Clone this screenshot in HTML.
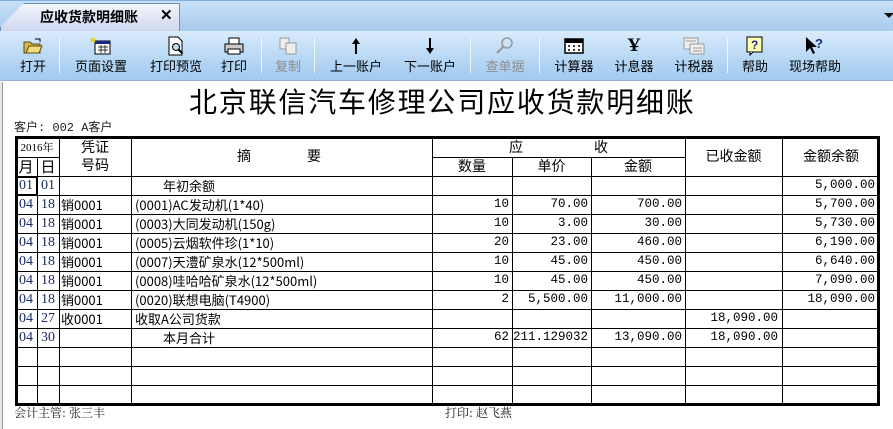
<!DOCTYPE html>
<html><head><meta charset="utf-8">
<style>
*{margin:0;padding:0;box-sizing:border-box}
body{width:893px;height:429px;overflow:hidden;background:#fff;font-family:"Liberation Sans","Noto Sans CJK SC",sans-serif;position:relative}
.a{position:absolute}
#tabbar{left:0;top:0;width:893px;height:31px;background:linear-gradient(#c9e0f7,#a8cbee);border-top:1px solid #7fb0e0}
#tab{left:0;top:3px;width:180px;height:28px;background:linear-gradient(#f3f6fd,#cfd6ef);border:1px solid #6a8fc0;border-bottom:none;clip-path:polygon(24px 0,180px 0,180px 28px,0 28px,0 24px);}
#toolbar{left:0;top:31px;width:893px;height:50px;background:linear-gradient(#d9ecfc,#b5d6f4 60%,#a3caf0);border-bottom:1px solid #8fb2d6}
.tb{position:absolute;top:31px;height:50px;text-align:center;font-size:13px;color:#000;font-family:"Noto Sans CJK SC",sans-serif}
.tb .ic{height:26px;display:flex;align-items:center;justify-content:center;padding-top:4px}
.tb .lb{line-height:16px;margin-top:1px}
.dis{color:#8d8d8d!important}
.sep{position:absolute;top:37px;width:1px;height:36px;background:#8fb5dc;border-right:1px solid #eef6ff}
.h{position:absolute;height:1px;background:#000}
.v{position:absolute;width:1px;background:#000}
.c{position:absolute;height:19px;line-height:19px;font-size:13px;font-family:"Noto Sans CJK SC",sans-serif;white-space:nowrap}
.n{font-family:"Liberation Mono","Noto Sans CJK SC",monospace;font-size:12.5px;text-align:right}
.md{font-family:"Liberation Serif",serif;font-size:14px;color:#1b2a66;text-align:center}
.hd{position:absolute;font-size:14px;font-family:"Noto Sans CJK SC",sans-serif;text-align:center;line-height:19px;white-space:pre}
</style></head><body>
<div class="a" id="tabbar"></div>
<div class="a" id="tab"></div>
<div class="a" style="left:40px;top:8px;font-size:14px;font-weight:bold;font-family:'Noto Sans CJK SC',sans-serif;line-height:18px">应收货款明细账</div>
<div class="a" style="left:160px;top:7px;font-size:15px;font-weight:bold;line-height:18px">✕</div>
<div class="a" style="left:884px;top:13px;width:0;height:0;border-left:5px solid transparent;border-right:5px solid transparent;border-top:5px solid #111"></div>
<div class="a" id="toolbar"></div>

<div class="tb" style="left:13px;width:40px"><div class="ic"><svg width="20" height="16"><path d="M1 4h6l2 2h8v9H1z" fill="#d8b84a" stroke="#5a4a10"/><path d="M3 15l3-7h13l-3 7z" fill="#f0dc7a" stroke="#5a4a10"/><path d="M12 1h5v3" fill="none" stroke="#000"/></svg></div><div class="lb">打开</div></div>
<div class="sep" style="left:59px"></div>
<div class="tb" style="left:68px;width:66px"><div class="ic"><svg width="22" height="18"><rect x="5" y="4" width="15" height="13" fill="#fff" stroke="#000"/><rect x="5" y="4" width="15" height="3" fill="#1a2a8a"/><path d="M8 10h10M8 13h10M11 8v8M15 8v8" stroke="#333"/><path d="M1 1l4 4M5 1L1 5" stroke="#e8d000" stroke-width="1.5"/></svg></div><div class="lb">页面设置</div></div>
<div class="tb" style="left:143px;width:66px"><div class="ic"><svg width="20" height="20"><path d="M3 1h9l4 4v14H3z" fill="#fff" stroke="#000"/><circle cx="10" cy="11" r="3.5" fill="#bde" stroke="#000"/><path d="M12.5 13.5l4 4" stroke="#000" stroke-width="2"/></svg></div><div class="lb">打印预览</div></div>
<div class="tb" style="left:214px;width:40px"><div class="ic"><svg width="22" height="18"><rect x="6" y="1" width="10" height="6" fill="#fff" stroke="#000"/><rect x="2" y="7" width="18" height="8" fill="#ccc" stroke="#000"/><rect x="5" y="12" width="12" height="5" fill="#fff" stroke="#000"/></svg></div><div class="lb">打印</div></div>
<div class="sep" style="left:261px"></div>
<div class="tb dis" style="left:268px;width:40px"><div class="ic"><svg width="20" height="18"><rect x="2" y="1" width="9" height="11" fill="#eee" stroke="#999"/><rect x="8" y="6" width="10" height="11" fill="#eee" stroke="#999"/></svg></div><div class="lb">复制</div></div>
<div class="sep" style="left:314px"></div>
<div class="tb" style="left:325px;width:62px"><div class="ic"><svg width="14" height="18"><path d="M7 1l-4 6h3v10h2V7h3z" fill="#000"/></svg></div><div class="lb">上一账户</div></div>
<div class="tb" style="left:399px;width:62px"><div class="ic"><svg width="14" height="18"><path d="M7 17l-4-6h3V1h2v10h3z" fill="#000"/></svg></div><div class="lb">下一账户</div></div>
<div class="sep" style="left:470px"></div>
<div class="tb dis" style="left:480px;width:50px"><div class="ic"><svg width="20" height="20"><circle cx="12" cy="7" r="5" fill="none" stroke="#999" stroke-width="1.5"/><path d="M8 11l-6 6" stroke="#999" stroke-width="2"/></svg></div><div class="lb">查单据</div></div>
<div class="sep" style="left:539px"></div>
<div class="tb" style="left:549px;width:50px"><div class="ic"><svg width="20" height="16"><rect x="1" y="1" width="18" height="14" fill="#fff" stroke="#000" stroke-width="1.5"/><rect x="1" y="1" width="18" height="4" fill="#000"/><path d="M4 8h2M9 8h2M14 8h2M4 12h2M9 12h2M14 12h2" stroke="#000" stroke-width="1.5"/></svg></div><div class="lb">计算器</div></div>
<div class="tb" style="left:609px;width:50px"><div class="ic" style="font-family:'Liberation Serif',serif;font-size:19px;font-weight:bold">Ұ</div><div class="lb">计息器</div></div>
<div class="tb" style="left:669px;width:50px"><div class="ic"><svg width="22" height="18"><rect x="1" y="1" width="14" height="11" fill="#eee" stroke="#999"/><rect x="7" y="7" width="14" height="10" fill="#eee" stroke="#999"/><path d="M3 4h10M10 11h9M10 14h9" stroke="#999"/></svg></div><div class="lb">计税器</div></div>
<div class="sep" style="left:727px"></div>
<div class="tb" style="left:735px;width:40px"><div class="ic"><svg width="18" height="20"><rect x="1" y="1" width="15" height="15" fill="#ffffb0" stroke="#000"/><text x="5" y="13" font-size="12" font-weight="bold" fill="#1a2a8a" font-family="Liberation Sans">?</text><path d="M4 16v3l3-3" fill="#fff" stroke="#000"/></svg></div><div class="lb">帮助</div></div>
<div class="tb" style="left:784px;width:62px"><div class="ic"><svg width="22" height="20"><path d="M2 1v15l4-4 3 6 2-1-3-6h5z" fill="#000"/><text x="11" y="12" font-size="13" font-weight="bold" fill="#1a2a8a" font-family="Liberation Sans">?</text></svg></div><div class="lb">现场帮助</div></div>

<div class="a" style="left:2px;top:82px;width:1px;height:347px;background:#9a9a9a"></div>
<div class="a" style="left:0;top:82px;width:2px;height:347px;background:#e6e6e6"></div>

<div class="a" style="left:189px;top:82px;font-size:28px;font-family:'Noto Sans CJK SC',sans-serif;line-height:38px;letter-spacing:1.8px;white-space:nowrap">北京联信汽车修理公司应收货款明细账</div>
<div class="a" style="left:14px;top:121px;font-size:12px;font-family:'Liberation Mono','Noto Sans CJK SC',monospace;line-height:14px;color:#222">客户: 002 A客户</div>

<div class="a" style="left:15px;top:136px;width:865px;height:270px;border:3px solid #000"></div>
<div class="h" style="left:15px;top:157px;width:44px"></div>
<div class="h" style="left:432px;top:157px;width:253px"></div>
<div class="h" style="left:15px;top:176px;width:865px"></div>
<div class="h" style="left:15px;top:195px;width:865px"></div>
<div class="h" style="left:15px;top:214px;width:865px"></div>
<div class="h" style="left:15px;top:233px;width:865px"></div>
<div class="h" style="left:15px;top:252px;width:865px"></div>
<div class="h" style="left:15px;top:271px;width:865px"></div>
<div class="h" style="left:15px;top:290px;width:865px"></div>
<div class="h" style="left:15px;top:309px;width:865px"></div>
<div class="h" style="left:15px;top:328px;width:865px"></div>
<div class="h" style="left:15px;top:347px;width:865px"></div>
<div class="h" style="left:15px;top:366px;width:865px"></div>
<div class="h" style="left:15px;top:385px;width:865px"></div>
<div class="v" style="left:37px;top:157px;height:248px"></div>
<div class="v" style="left:59px;top:136px;height:269px"></div>
<div class="v" style="left:131px;top:136px;height:269px"></div>
<div class="v" style="left:432px;top:136px;height:269px"></div>
<div class="v" style="left:512px;top:157px;height:248px"></div>
<div class="v" style="left:591px;top:157px;height:248px"></div>
<div class="v" style="left:685px;top:136px;height:269px"></div>
<div class="v" style="left:782px;top:136px;height:269px"></div>
<div class="a" style="left:16px;top:176px;width:22px;height:20px;border:2px solid #000"></div>

<div class="hd" style="left:15px;top:139px;width:44px;font-family:'Liberation Serif','Noto Serif CJK SC',serif;font-size:11px;line-height:18px">2016年</div>
<div class="hd" style="left:15px;top:157px;width:22px;font-size:15px">月</div>
<div class="hd" style="left:37px;top:157px;width:22px;font-size:15px">日</div>
<div class="hd" style="left:59px;top:138px;width:72px;line-height:18px">凭证
号码</div>
<div class="hd" style="left:237px;top:147px">摘</div>
<div class="hd" style="left:307px;top:147px">要</div>
<div class="hd" style="left:509px;top:138px">应</div>
<div class="hd" style="left:594px;top:138px">收</div>
<div class="hd" style="left:432px;top:157px;width:80px">数量</div>
<div class="hd" style="left:512px;top:157px;width:79px">单价</div>
<div class="hd" style="left:591px;top:157px;width:94px">金额</div>
<div class="hd" style="left:685px;top:147px;width:97px">已收金额</div>
<div class="hd" style="left:782px;top:147px;width:98px">金额余额</div>

<div class="c md" style="left:15px;top:176px;width:22px">01</div><div class="c md" style="left:37px;top:176px;width:22px">01</div>
<div class="c" style="left:163px;top:176px">年初余额</div>
<div class="c n" style="left:782px;top:176px;width:93px">5,000.00</div>

<div class="c md" style="left:15px;top:195px;width:22px">04</div><div class="c md" style="left:37px;top:195px;width:22px">18</div>
<div class="c" style="left:61px;top:195px">销0001</div><div class="c" style="left:135px;top:195px">(0001)AC发动机(1*40)</div>
<div class="c n" style="left:432px;top:195px;width:77px">10</div><div class="c n" style="left:512px;top:195px;width:76px">70.00</div><div class="c n" style="left:591px;top:195px;width:91px">700.00</div><div class="c n" style="left:782px;top:195px;width:93px">5,700.00</div>

<div class="c md" style="left:15px;top:214px;width:22px">04</div><div class="c md" style="left:37px;top:214px;width:22px">18</div>
<div class="c" style="left:61px;top:214px">销0001</div><div class="c" style="left:135px;top:214px">(0003)大同发动机(150g)</div>
<div class="c n" style="left:432px;top:214px;width:77px">10</div><div class="c n" style="left:512px;top:214px;width:76px">3.00</div><div class="c n" style="left:591px;top:214px;width:91px">30.00</div><div class="c n" style="left:782px;top:214px;width:93px">5,730.00</div>

<div class="c md" style="left:15px;top:233px;width:22px">04</div><div class="c md" style="left:37px;top:233px;width:22px">18</div>
<div class="c" style="left:61px;top:233px">销0001</div><div class="c" style="left:135px;top:233px">(0005)云烟软件珍(1*10)</div>
<div class="c n" style="left:432px;top:233px;width:77px">20</div><div class="c n" style="left:512px;top:233px;width:76px">23.00</div><div class="c n" style="left:591px;top:233px;width:91px">460.00</div><div class="c n" style="left:782px;top:233px;width:93px">6,190.00</div>

<div class="c md" style="left:15px;top:252px;width:22px">04</div><div class="c md" style="left:37px;top:252px;width:22px">18</div>
<div class="c" style="left:61px;top:252px">销0001</div><div class="c" style="left:135px;top:252px">(0007)天澧矿泉水(12*500ml)</div>
<div class="c n" style="left:432px;top:252px;width:77px">10</div><div class="c n" style="left:512px;top:252px;width:76px">45.00</div><div class="c n" style="left:591px;top:252px;width:91px">450.00</div><div class="c n" style="left:782px;top:252px;width:93px">6,640.00</div>

<div class="c md" style="left:15px;top:271px;width:22px">04</div><div class="c md" style="left:37px;top:271px;width:22px">18</div>
<div class="c" style="left:61px;top:271px">销0001</div><div class="c" style="left:135px;top:271px">(0008)哇哈哈矿泉水(12*500ml)</div>
<div class="c n" style="left:432px;top:271px;width:77px">10</div><div class="c n" style="left:512px;top:271px;width:76px">45.00</div><div class="c n" style="left:591px;top:271px;width:91px">450.00</div><div class="c n" style="left:782px;top:271px;width:93px">7,090.00</div>

<div class="c md" style="left:15px;top:290px;width:22px">04</div><div class="c md" style="left:37px;top:290px;width:22px">18</div>
<div class="c" style="left:61px;top:290px">销0001</div><div class="c" style="left:135px;top:290px">(0020)联想电脑(T4900)</div>
<div class="c n" style="left:432px;top:290px;width:77px">2</div><div class="c n" style="left:512px;top:290px;width:76px">5,500.00</div><div class="c n" style="left:591px;top:290px;width:91px">11,000.00</div><div class="c n" style="left:782px;top:290px;width:93px">18,090.00</div>

<div class="c md" style="left:15px;top:309px;width:22px">04</div><div class="c md" style="left:37px;top:309px;width:22px">27</div>
<div class="c" style="left:61px;top:309px">收0001</div><div class="c" style="left:135px;top:309px">收取A公司货款</div>
<div class="c n" style="left:685px;top:309px;width:93px">18,090.00</div>

<div class="c md" style="left:15px;top:328px;width:22px">04</div><div class="c md" style="left:37px;top:328px;width:22px">30</div>
<div class="c" style="left:163px;top:328px">本月合计</div>
<div class="c n" style="left:432px;top:328px;width:77px">62</div><div class="c n" style="left:512px;top:328px;width:76px">211.129032</div><div class="c n" style="left:591px;top:328px;width:91px">13,090.00</div><div class="c n" style="left:685px;top:328px;width:93px">18,090.00</div>

<div class="a" style="left:14px;top:406px;font-size:12px;font-family:'Noto Serif CJK SC',serif;line-height:14px;color:#222">会计主管: 张三丰</div>
<div class="a" style="left:445px;top:406px;font-size:12px;font-family:'Noto Serif CJK SC',serif;line-height:14px;color:#222">打印: 赵飞燕</div>
</body></html>
